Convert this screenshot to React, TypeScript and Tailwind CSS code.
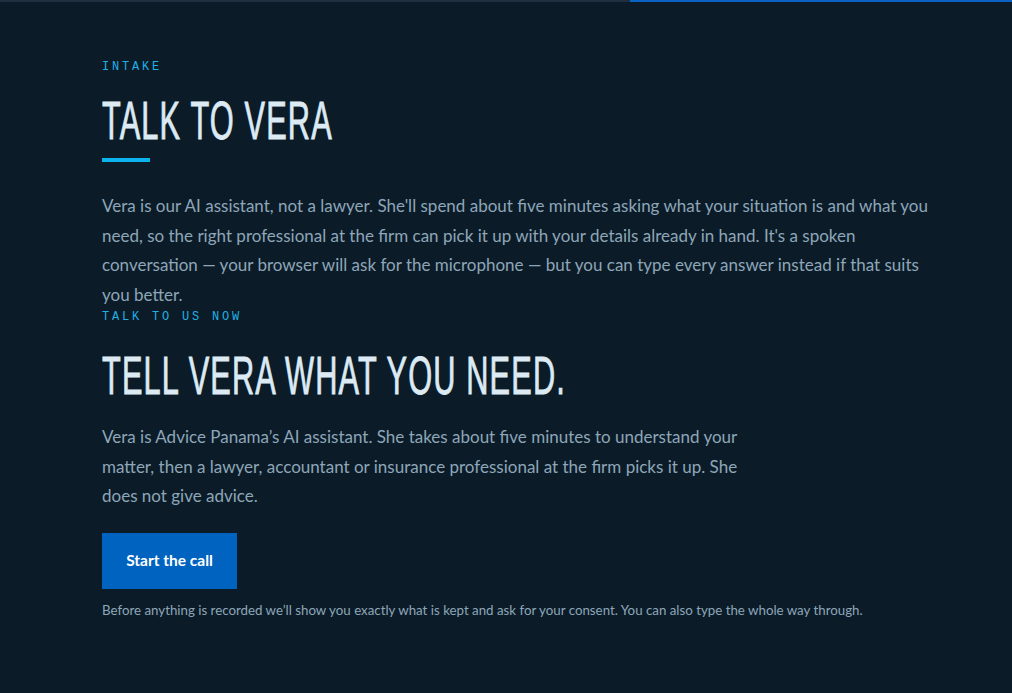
import React from "react";

const mono = "font-['Liberation_Mono','DejaVu_Sans_Mono',monospace]";
const body = "font-['Lato','Noto_Sans',sans-serif]";
const display =
	"font-['Liberation_Sans',sans-serif] origin-left scale-x-[0.58] tracking-[2px] whitespace-nowrap [-webkit-text-stroke:0.9px_#dceaf4]";

const Eyebrow = ({ children }: { children: React.ReactNode }) => (
	<div className={`${mono} text-[12px] leading-[16px] tracking-[2.8px] text-[#22afe4]`}>
		{children}
	</div>
);

const App = () => {
	return (
		<div className="min-h-screen bg-[#0b1c28]">
			{/* progress strip */}
			<div className="flex h-[2px]">
				<div className="w-[630px] bg-[#1e3040]" />
				<div className="flex-1 bg-[#0a63c4]" />
			</div>

			<div className="pl-[102px] pr-[40px] pt-[57px]">
				<Eyebrow>INTAKE</Eyebrow>

				<h1 className={`${display} mt-[19px] text-[53px] leading-[53px] text-[#dceaf4]`}>
					TALK TO VERA
				</h1>
				<div className="mt-[11px] h-[4px] w-[48px] bg-[#0bb4ec]" />

				<p className={`${body} mt-[29px] max-w-[840px] text-[17px] leading-[29.5px] text-[#8ea6b8]`}>
					Vera is our AI assistant, not a lawyer. She'll spend about five minutes asking what your
					situation is and what you need, so the right professional at the firm can pick it up with
					your details already in hand. It's a spoken conversation — your browser will ask for the
					microphone — but you can type every answer instead if that suits you better.
				</p>

				<Eyebrow>TALK TO US NOW</Eyebrow>

				<h2 className={`${display} mt-[24px] text-[53px] leading-[53px] text-[#dceaf4]`}>
					TELL VERA WHAT YOU NEED.
				</h2>

				<p className={`${body} mt-[20px] max-w-[645px] text-[17px] leading-[29.5px] text-[#8ea6b8]`}>
					Vera is Advice Panama’s AI assistant. She takes about five minutes to understand your
					matter, then a lawyer, accountant or insurance professional at the firm picks it up. She
					does not give advice.
				</p>

				<button
					className={`${body} mt-[22px] h-[56px] w-[135px] bg-[#0063c0] text-[15.5px] font-bold text-white`}>
					Start the call
				</button>

				<p className={`${body} mt-[11px] text-[13.3px] leading-[20px] text-[#8ea6b8]`}>
					Before anything is recorded we’ll show you exactly what is kept and ask for your consent.
					You can also type the whole way through.
				</p>
			</div>
		</div>
	);
};

export default App;
